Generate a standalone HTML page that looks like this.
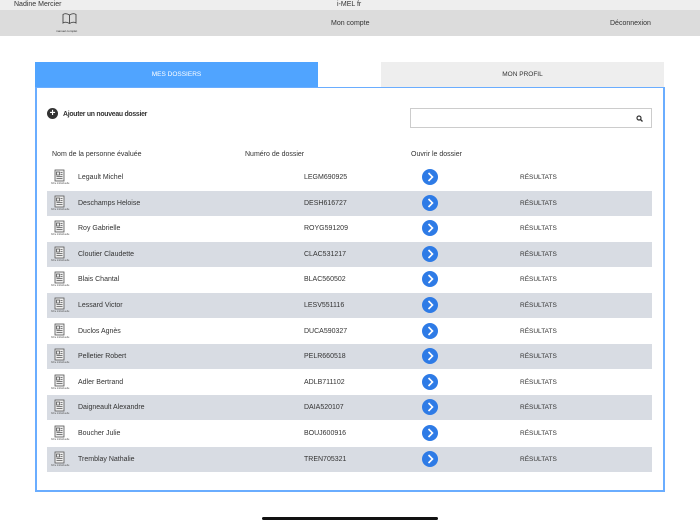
<!DOCTYPE html>
<html><head><meta charset="utf-8"><style>
*{margin:0;padding:0;box-sizing:border-box}
body{width:700px;height:525px;background:#fff;font-family:"Liberation Sans",sans-serif;color:#333;position:relative;overflow:hidden;font-size:7px}
.a{position:absolute}
.row{position:absolute;left:47px;width:605px;height:25px}
.row.s{background:#d8dce3}
.ic{position:absolute;left:6px;top:4px;width:13px;height:13px}
.ict{position:absolute;left:4px;top:17px;font-size:2.5px;color:#555}
.nm{position:absolute;left:31px;top:9px;font-size:7px}
.num{position:absolute;left:257px;top:9px;font-size:7px}
.cv{position:absolute;left:375px;top:4px;width:16px;height:16px;border-radius:50%;background:#2e7be6}
.res{position:absolute;left:473px;top:9px;font-size:6.5px}
</style></head><body>
<div class="a" style="left:0;top:0;width:700px;height:10px;background:#eee"></div>
<div class="a" style="left:14px;top:1px;font-size:7px">Nadine Mercier</div>
<div class="a" style="left:337px;top:1px;font-size:7px">i-MEL fr</div>
<div class="a" style="left:0;top:10px;width:700px;height:26px;background:#dcdcdc"></div>
<svg class="a" style="left:62px;top:13px" width="15" height="11" viewBox="0 0 15 11"><path d="M7.5 2 C5 0.5 2.5 0.5 1 1.5 V10 C2.5 9 5 9 7.5 10.5 C10 9 12.5 9 14 10 V1.5 C12.5 0.5 10 0.5 7.5 2 Z M7.5 2 V10.5" fill="none" stroke="#444" stroke-width="0.9"/></svg>
<div class="a" style="left:56px;top:29px;font-size:3px">manuel complet</div>
<div class="a" style="left:331px;top:20px;font-size:7px">Mon compte</div>
<div class="a" style="left:610px;top:20px;font-size:7px">Déconnexion</div>
<div class="a" style="left:35px;top:62px;width:283px;height:26px;background:#50a4ff;color:#fff;text-align:center;line-height:26px;font-size:6.5px">MES DOSSIERS</div>
<div class="a" style="left:381px;top:62px;width:283px;height:26px;background:#eee;text-align:center;line-height:26px;font-size:6.5px">MON PROFIL</div>
<div class="a" style="left:35px;top:87px;width:630px;height:405px;border:2px solid #6aadff;border-top:1.5px solid #6aadff"></div>
<div class="a" style="left:47px;top:108px;width:11px;height:11px;border-radius:50%;background:#333;color:#fff;text-align:center;line-height:11px;font-size:10px;font-weight:bold">+</div>
<div class="a" style="left:63px;top:109px;font-size:7.5px;font-weight:bold;letter-spacing:-0.3px;transform:scaleX(0.92);transform-origin:left">Ajouter un nouveau dossier</div>
<div class="a" style="left:410px;top:108px;width:242px;height:20px;border:1px solid #ccc;background:#fff"></div>
<svg class="a" style="left:636px;top:115px" width="7" height="7" viewBox="0 0 7 7"><circle cx="3" cy="3" r="2" fill="none" stroke="#333" stroke-width="1.2"/><path d="M4.5 4.5 L6.5 6.5" stroke="#333" stroke-width="1.3"/></svg>
<div class="a" style="left:52px;top:151px;font-size:7px">Nom de la personne évaluée</div>
<div class="a" style="left:245px;top:151px;font-size:7px">Numéro de dossier</div>
<div class="a" style="left:411px;top:151px;font-size:7px">Ouvrir le dossier</div>
<div id="rows"></div>
<script>
var d=[["Legault Michel","LEGM690925"],["Deschamps Heloise","DESH616727"],["Roy Gabrielle","ROYG591209"],["Cloutier Claudette","CLAC531217"],["Blais Chantal","BLAC560502"],["Lessard Victor","LESV551116"],["Duclos Agnès","DUCA590327"],["Pelletier Robert","PELR660518"],["Adler Bertrand","ADLB711102"],["Daigneault Alexandre","DAIA520107"],["Boucher Julie","BOUJ600916"],["Tremblay Nathalie","TREN705321"]];
var h="";d.forEach(function(r,i){var y=165+i*25.6;h+='<div class="row'+(i%2?' s':'')+'" style="top:'+y+'px"><svg class="ic" viewBox="0 0 13 13"><rect x="2" y="1" width="9" height="11" fill="#eee" stroke="#555" stroke-width="0.8"/><path d="M3.5 3h3v3h-3zM7.5 3.5h2M7.5 5.5h2M3.5 7.5h6M3.5 9.5h6" stroke="#555" stroke-width="0.8" fill="none"/></svg><div class="ict">fiche individuelle</div><div class="nm">'+r[0]+'</div><div class="num">'+r[1]+'</div><svg class="cv" viewBox="0 0 16 16"><path d="M6.5 4 L10.5 8 L6.5 12" fill="none" stroke="#fff" stroke-width="1.6"/></svg><div class="res">RÉSULTATS</div></div>'});
document.getElementById("rows").innerHTML=h;
</script>
<div class="a" style="left:262px;top:517px;width:176px;height:3px;border-radius:2px;background:#111"></div>
</body></html>
